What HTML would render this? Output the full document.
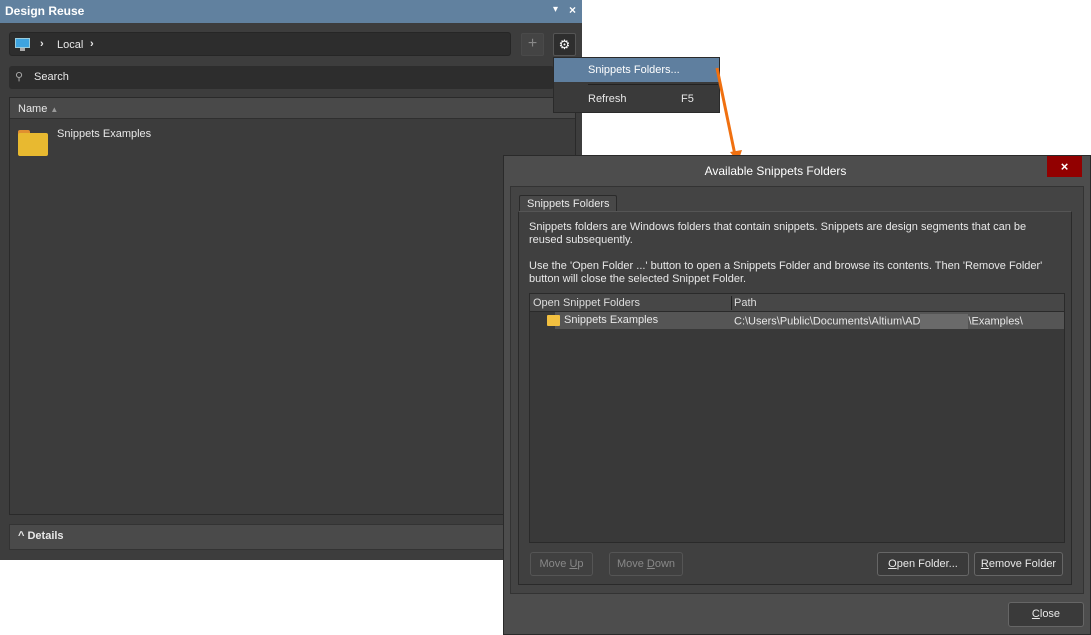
<!DOCTYPE html>
<html><head><style>
*{box-sizing:border-box;margin:0;padding:0}
body{width:1091px;height:635px;background:#fff;position:relative;overflow:hidden;font-family:"Liberation Sans","DejaVu Sans",sans-serif;font-size:11px;color:#e8e8e8}
.a{position:absolute}
</style></head><body>
<div class="a" style="left:0;top:0;width:582px;height:560px;background:#3d3d3d"></div>
<div class="a" style="left:0;top:0;width:582px;height:23px;background:#61819f"></div>
<div class="a" style="left:5px;top:4px;font-weight:bold;font-size:12px;color:#fff">Design Reuse</div>
<div class="a" style="left:553px;top:4px;font-size:10px;color:#fff">▾</div>
<div class="a" style="left:569px;top:3px;font-size:12px;color:#fff;font-weight:bold">×</div>
<div class="a" style="left:9px;top:32px;width:502px;height:24px;background:#2d2d2d;border-radius:3px;border:1px solid #262626"></div>
<div class="a" style="left:15px;top:38px;width:15px;height:10px;background:#3ea4e0;border:1px solid #9cd"></div>
<div class="a" style="left:20px;top:48px;width:5px;height:3px;background:#aaa"></div>
<div class="a" style="left:40px;top:38px;font-weight:bold">›</div>
<div class="a" style="left:57px;top:39px">Local</div>
<div class="a" style="left:90px;top:38px;font-weight:bold">›</div>
<div class="a" style="left:521px;top:33px;width:23px;height:23px;background:#444;border:1px solid #4a4a4a;border-radius:2px;color:#888;text-align:center;font-size:16px;line-height:20px">+</div>
<div class="a" style="left:553px;top:33px;width:23px;height:23px;background:#2e2e2e;border:1px solid #555;border-radius:2px;color:#fff;text-align:center;font-size:13px;line-height:21px">⚙</div>
<div class="a" style="left:9px;top:66px;width:545px;height:23px;background:#2d2d2d;border-radius:3px"></div>
<div class="a" style="left:15px;top:70px;color:#aaa;font-size:11px">⚲</div>
<div class="a" style="left:34px;top:71px">Search</div>
<div class="a" style="left:9px;top:97px;width:567px;height:418px;background:#3c3c3c;border:1px solid #2a2a2a"></div>
<div class="a" style="left:10px;top:98px;width:565px;height:21px;background:#494949;border-bottom:1px solid #2f2f2f"></div>
<div class="a" style="left:18px;top:103px">Name <span style="color:#999;font-size:8px">▲</span></div>
<div class="a" style="left:18px;top:130px;width:12px;height:5px;background:#e09030;border-radius:2px 2px 0 0"></div>
<div class="a" style="left:18px;top:133px;width:30px;height:23px;background:#e8b930;border-radius:2px"></div>
<div class="a" style="left:57px;top:128px">Snippets Examples</div>
<div class="a" style="left:9px;top:524px;width:567px;height:26px;background:#4a4a4a;border:1px solid #333"></div>
<div class="a" style="left:18px;top:530px;font-weight:bold">^ Details</div>
<div class="a" style="left:553px;top:57px;width:167px;height:56px;background:#3a3a3a;border:1px solid #2a2a2a"></div>
<div class="a" style="left:554px;top:58px;width:165px;height:24px;background:#5f7f9f"></div>
<div class="a" style="left:588px;top:64px;color:#fff">Snippets Folders...</div>
<div class="a" style="left:588px;top:84px;width:130px;height:1px;background:#222"></div>
<div class="a" style="left:588px;top:93px">Refresh</div>
<div class="a" style="left:681px;top:93px">F5</div>
<svg class="a" style="left:700px;top:60px" width="50" height="110"><line x1="17" y1="8" x2="35" y2="95" stroke="#f07010" stroke-width="3"/><polygon points="30,92 42,90 38,102" fill="#f07010"/></svg>
<div class="a" style="left:503px;top:155px;width:588px;height:480px;background:#4d4d4d;border:1px solid #2a2a2a"></div>
<div class="a" style="left:503px;top:164px;width:545px;text-align:center;font-size:12px;color:#fff">Available Snippets Folders</div>
<div class="a" style="left:1047px;top:156px;width:35px;height:21px;background:#920000;color:#fff;text-align:center;font-weight:bold;font-size:13px;line-height:21px">×</div>
<div class="a" style="left:510px;top:186px;width:574px;height:408px;background:#444;border:1px solid #333"></div>
<div class="a" style="left:519px;top:195px;width:98px;height:18px;background:#484848;border:1px solid #2a2a2a;border-bottom:none;border-radius:2px 2px 0 0;padding:2px 0 0 7px">Snippets Folders</div>
<div class="a" style="left:518px;top:211px;width:554px;height:374px;background:#404040;border:1px solid #2a2a2a;border-top:1px solid #555"></div>
<div class="a" style="left:529px;top:221px;width:528px;line-height:13px">Snippets folders are Windows folders that contain snippets. Snippets are design segments that can be reused subsequently.<br><br>Use the 'Open Folder ...' button to open a Snippets Folder and browse its contents. Then 'Remove Folder' button will close the selected Snippet Folder.</div>
<div class="a" style="left:529px;top:293px;width:536px;height:250px;background:#393939;border:1px solid #2a2a2a"></div>
<div class="a" style="left:530px;top:294px;width:534px;height:18px;background:#474747;border-bottom:1px solid #2a2a2a"></div>
<div class="a" style="left:533px;top:297px;color:#ddd">Open Snippet Folders</div>
<div class="a" style="left:731px;top:296px;width:1px;height:14px;background:#222"></div>
<div class="a" style="left:734px;top:297px;color:#ddd">Path</div>
<div class="a" style="left:555px;top:312px;width:509px;height:17px;background:#555"></div>
<div class="a" style="left:547px;top:315px;width:13px;height:11px;background:#f2c040;border-radius:1px"></div>
<div class="a" style="left:564px;top:314px">Snippets Examples</div>
<div class="a" style="left:734px;top:314px">C:\Users\Public\Documents\Altium\AD<span style="display:inline-block;width:48px;height:15px;background:#6a6a6a;vertical-align:middle"></span>\Examples\</div>
<div class="a" style="left:530px;top:552px;width:63px;height:24px;border:1px solid #555;border-radius:3px;color:#888;text-align:center;line-height:22px">Move <u>U</u>p</div>
<div class="a" style="left:609px;top:552px;width:74px;height:24px;border:1px solid #555;border-radius:3px;color:#888;text-align:center;line-height:22px">Move <u>D</u>own</div>
<div class="a" style="left:877px;top:552px;width:92px;height:24px;background:#3a3a3a;border:1px solid #666;border-radius:3px;text-align:center;line-height:22px"><u>O</u>pen Folder...</div>
<div class="a" style="left:974px;top:552px;width:89px;height:24px;background:#3a3a3a;border:1px solid #666;border-radius:3px;text-align:center;line-height:22px"><u>R</u>emove Folder</div>
<div class="a" style="left:1008px;top:602px;width:76px;height:25px;background:#3a3a3a;border:1px solid #666;border-radius:3px;text-align:center;line-height:23px"><u>C</u>lose</div>
</body></html>
